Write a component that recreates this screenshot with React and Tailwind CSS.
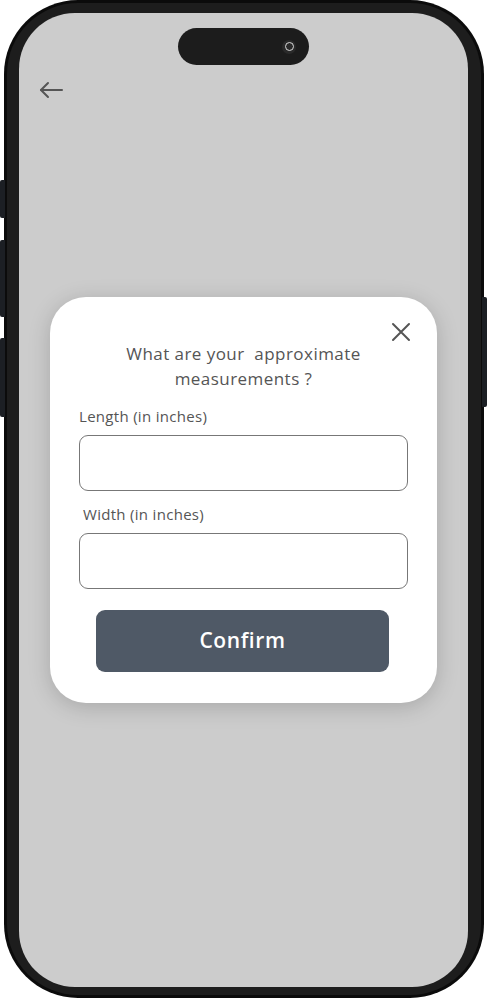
import { useState } from 'react';

const font = { fontFamily: '"Open Sans", "Liberation Sans", sans-serif' };

const Field = ({ label, indent, value, onChange }) => (
  <div className="flex flex-col">
    <label className={`text-[15px] leading-[20px] tracking-[0.3px] text-[#555] ${indent}`}>{label}</label>
    <input
      value={value}
      onChange={(e) => onChange(e.target.value)}
      className="mt-[9px] h-[56px] w-full rounded-[9px] border border-[#777] bg-white px-3 outline-none"
    />
  </div>
);

export default function App() {
  const [length, setLength] = useState('');
  const [width, setWidth] = useState('');

  return (
    <div className="relative h-[1000px] w-[487px] overflow-hidden bg-white" style={font}>
      {/* side buttons */}
      <div className="absolute left-0 top-[180px] h-[38px] w-[5px] rounded-l-[2px] bg-[#1c1f24]" />
      <div className="absolute left-0 top-[240px] h-[77px] w-[5px] rounded-l-[2px] bg-[#1c1f24]" />
      <div className="absolute left-0 top-[338px] h-[79px] w-[5px] rounded-l-[2px] bg-[#1c1f24]" />
      <div className="absolute right-0 top-[297px] h-[110px] w-[5px] rounded-r-[2px] bg-[#1c1f24]" />

      {/* phone body */}
      <div className="ml-[4px] h-[998px] w-[480px] rounded-[74px] bg-[#0b0b0b] p-[3px]">
        <div className="h-full w-full rounded-[71px] bg-[#1d1d1d] pb-[8px] pl-[12px] pr-[13px] pt-[10px]">
          {/* screen */}
          <div className="flex h-full w-full flex-col rounded-[56px] bg-[#cccccc]">
            <div className="mx-auto mt-[15px] flex h-[37px] w-[131px] items-center justify-end rounded-full bg-[#1c1c1c] pr-[13px]">
              <div className="flex h-[14px] w-[14px] items-center justify-center rounded-full bg-[#2a2a2a]">
                <div className="h-[9px] w-[9px] rounded-full border border-[#d8d8d8]" />
              </div>
            </div>

            <button className="ml-[19px] mt-[13px] w-fit text-[#555]">
              <svg width="26" height="24" viewBox="0 0 26 24" fill="none" stroke="currentColor" strokeWidth="2" strokeLinecap="round" strokeLinejoin="round">
                <path d="M24 12H3" />
                <path d="M10 5l-7 7 7 7" />
              </svg>
            </button>

            {/* modal */}
            <div className="relative mx-[31px] mt-[195px] rounded-[36px] bg-white px-[29px] pb-[31px] pt-[44px] shadow-[0_4px_22px_rgba(0,0,0,0.18)]">
              <button className="absolute right-[25px] top-[24px] text-[#555]">
                <svg width="22" height="22" viewBox="0 0 22 22" fill="none" stroke="currentColor" strokeWidth="2" strokeLinecap="round">
                  <path d="M3 3l16 16M19 3L3 19" />
                </svg>
              </button>

              <h2 className="text-center text-[17px] leading-[25px] tracking-[0.45px] text-[#555]">
                What are your&nbsp; approximate
                <br />
                measurements ?
              </h2>

              <div className="mt-[15px] flex flex-col gap-[13px]">
                <Field label="Length (in inches)" indent="" value={length} onChange={setLength} />
                <Field label="Width (in inches)" indent="pl-[4px]" value={width} onChange={setWidth} />
              </div>

              <button className="ml-[17px] mt-[21px] flex h-[62px] w-[293px] items-center justify-center rounded-[9px] bg-[#4f5966] text-[21px] font-semibold tracking-[0.6px] text-white">
                Confirm
              </button>
            </div>
          </div>
        </div>
      </div>
    </div>
  );
}
